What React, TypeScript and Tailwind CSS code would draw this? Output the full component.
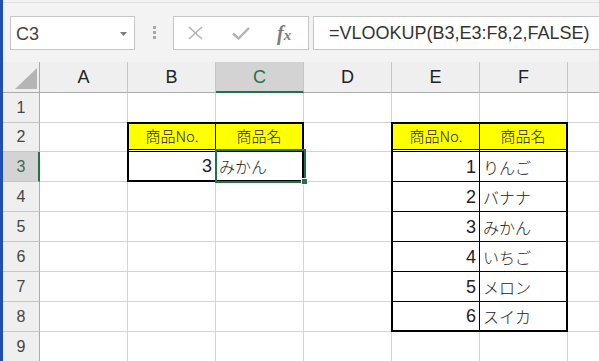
import React from 'react';

const GRID =
  'grid grid-cols-[37px_repeat(6,88px)_1fr] grid-rows-[31px_30px_29px_repeat(7,30px)]';

const LATIN = "font-['Liberation_Sans','Noto_Sans_CJK_JP',sans-serif]";
const JP = "font-['Noto_Sans_CJK_JP',sans-serif] font-light";

const cols = ['A', 'B', 'C', 'D', 'E', 'F'];
const rows = [1, 2, 3, 4, 5, 6, 7, 8, 9];
const products = [
  { no: 1, name: 'りんご' },
  { no: 2, name: 'バナナ' },
  { no: 3, name: 'みかん' },
  { no: 4, name: 'いちご' },
  { no: 5, name: 'メロン' },
  { no: 6, name: 'スイカ' },
];

function Toolbar() {
  return (
    <div className="h-[62px] shrink-0 bg-[#f3f3f3] pt-[2px]">
      <div className="flex h-full items-start border-t border-[#e1e1e1] pl-[7px] pt-[13px]">
        <div
          className={`flex h-[34px] w-[125px] items-center justify-between border border-[#c6c6c6] bg-white pl-[5px] pr-[7px] pt-[2px] text-[18px] text-[#444] ${LATIN}`}
        >
          <span>C3</span>
          <svg width="7" height="4" viewBox="0 0 7 4">
            <polygon points="0,0 7,0 3.5,4" fill="#7a7a7a" />
          </svg>
        </div>
        <div className="ml-[18px] mt-[10px] flex flex-col gap-[2px]">
          <div className="h-[3px] w-[3px] bg-[#a8a8a8]" />
          <div className="h-[3px] w-[3px] bg-[#a8a8a8]" />
          <div className="h-[3px] w-[3px] bg-[#a8a8a8]" />
        </div>
        <div className="ml-[17px] flex h-[34px] w-[136px] items-center border border-[#c6c6c6] bg-white pl-[14px]">
          <svg width="15" height="14" viewBox="0 0 15 14">
            <line x1="1" y1="1" x2="14" y2="13" stroke="#b3b3b3" strokeWidth="1.6" />
            <line x1="14" y1="1" x2="1" y2="13" stroke="#b3b3b3" strokeWidth="1.6" />
          </svg>
          <svg className="ml-[29px]" width="18" height="13" viewBox="0 0 18 13">
            <polyline
              points="1,6.5 6.5,11.5 17,1"
              fill="none"
              stroke="#b3b3b3"
              strokeWidth="2.4"
            />
          </svg>
          <span className="ml-[27px] font-['Liberation_Serif',serif] text-[20px] font-bold italic leading-none text-[#7d7d7d]">
            f<span className="text-[15px]">x</span>
          </span>
        </div>
        <div
          className={`ml-[4px] flex h-[34px] flex-1 items-center border border-r-0 border-[#c6c6c6] bg-white pl-[15px] pt-[1px] text-[18px] text-[#333] ${LATIN}`}
        >
          =VLOOKUP(B3,E3:F8,2,FALSE)
        </div>
      </div>
    </div>
  );
}

function BaseGrid() {
  return (
    <div className={`col-start-1 row-start-1 ${GRID}`}>
      <div className="flex items-end justify-end border-b border-r border-b-[#ababab] border-r-[#ababab] bg-[#efefef] pb-[3px] pr-[2px]">
        <svg width="22" height="21" viewBox="0 0 22 21">
          <polygon points="22,0 22,21 0,21" fill="#b5b5b5" />
        </svg>
      </div>
      {cols.map((c) =>
        c === 'C' ? (
          <div
            key={c}
            className="flex items-center justify-center border-b-2 border-r border-b-[#217346] border-r-[#c6c6c6] bg-[#d3d3d3] pt-[2px] text-[18px] text-[#217346]"
          >
            {c}
          </div>
        ) : (
          <div
            key={c}
            className="flex items-center justify-center border-b border-r border-b-[#ababab] border-r-[#c6c6c6] bg-[#efefef] pt-[1px] text-[18px] text-[#222]"
          >
            {c}
          </div>
        ),
      )}
      <div className="border-b border-b-[#ababab] bg-[#efefef]" />
      {rows.map((r) => (
        <React.Fragment key={r}>
          {r === 3 ? (
            <div className="flex items-center justify-center border-b border-r-2 border-b-[#c6c6c6] border-r-[#217346] bg-[#d3d3d3] pl-[1px] text-[16px] text-[#3c6b52]">
              {r}
            </div>
          ) : (
            <div className="flex items-center justify-center border-b border-r border-b-[#c6c6c6] border-r-[#ababab] bg-[#efefef] text-[16px] text-[#444]">
              {r}
            </div>
          )}
          {cols.map((c) => (
            <div key={c} className="border-b border-r border-[#d4d4d4] bg-white" />
          ))}
          <div className="border-b border-[#d4d4d4] bg-white" />
        </React.Fragment>
      ))}
    </div>
  );
}

function HeaderCell({ label, last }: { label: string; last?: boolean }) {
  return (
    <div
      className={`flex items-center justify-center border-b-[3px] border-double border-b-black bg-[#ffff00] bg-clip-padding pb-[1px] text-[15px] text-[#222] ${JP} ${
        last ? '' : 'border-r border-r-black'
      }`}
    >
      {label}
    </div>
  );
}

function NumCell({ n, line }: { n: number; line?: boolean }) {
  return (
    <div
      className={`flex items-center justify-end border-r border-r-black pr-[3px] pt-[1px] text-[18px] text-[#222] ${LATIN} ${
        line ? 'border-b border-b-black' : ''
      }`}
    >
      {n}
    </div>
  );
}

function NameCell({ s, line }: { s: string; line?: boolean }) {
  return (
    <div
      className={`flex items-center pl-[3px] text-[16px] text-[#222] ${JP} ${
        line ? 'border-b border-b-black' : ''
      }`}
    >
      {s}
    </div>
  );
}

function Overlay() {
  return (
    <div className={`col-start-1 row-start-1 ${GRID}`}>
      <div className="col-span-2 col-start-3 row-span-2 row-start-3 -ml-px -mt-px grid grid-cols-[87px_1fr] grid-rows-[28px_1fr] border-2 border-black bg-white">
        <HeaderCell label="商品No." />
        <HeaderCell label="商品名" last />
        <NumCell n={3} />
        <NameCell s="みかん" />
      </div>
      <div className="col-span-2 col-start-6 row-span-7 row-start-3 -ml-px -mt-px grid grid-cols-[87px_1fr] grid-rows-[28px_repeat(5,30px)_1fr] border-2 border-black bg-white">
        <HeaderCell label="商品No." />
        <HeaderCell label="商品名" last />
        {products.map((p, i) => (
          <React.Fragment key={p.no}>
            <NumCell n={p.no} line={i < products.length - 1} />
            <NameCell s={p.name} line={i < products.length - 1} />
          </React.Fragment>
        ))}
      </div>
      <div className="relative col-start-4 row-start-4 -mb-px -ml-px -mr-[2px] -mt-[3px] border-2 border-[#217346]">
        <div className="absolute -bottom-[4px] -right-[4px] h-[7px] w-[7px] border border-white bg-[#217346]" />
      </div>
    </div>
  );
}

export default function App() {
  return (
    <div className={`flex h-[361px] w-[599px] overflow-hidden bg-white ${LATIN}`}>
      <div className="w-[3px] shrink-0 bg-[#1e50b4]" />
      <div className="flex min-w-0 flex-1 flex-col">
        <Toolbar />
        <div className="grid">
          <BaseGrid />
          <Overlay />
        </div>
      </div>
    </div>
  );
}
